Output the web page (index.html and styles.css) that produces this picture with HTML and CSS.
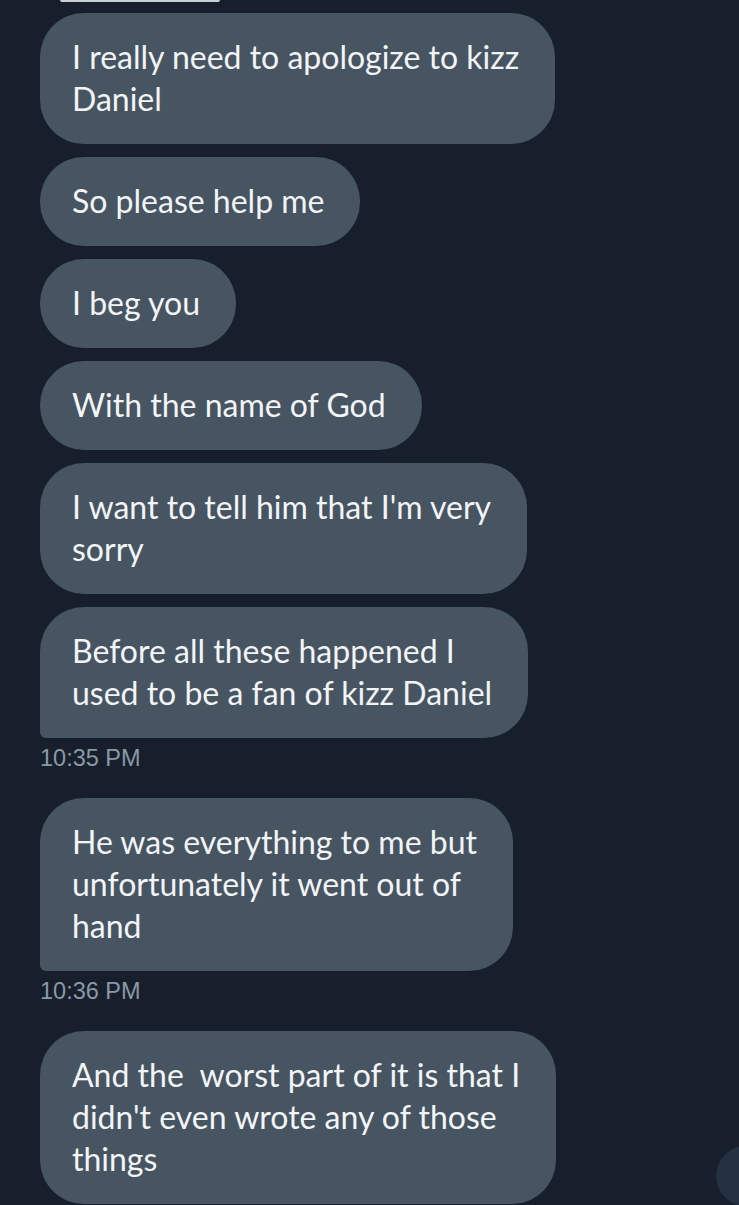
FILE: index.html
```html
<!DOCTYPE html>
<html lang="en">
<head>
    <meta charset="UTF-8">
    <meta name="viewport" content="width=device-width, initial-scale=1.0">
    <title>Messages</title>
    <link rel="stylesheet" href="styles.css">
</head>
<body>
    <div class="screen">
        <div class="thread">
            <div class="prev-card"></div>

            <div class="group">
                <div class="bubble">I really need to apologize to kizz<br>Daniel</div>
                <div class="bubble">So please help me</div>
                <div class="bubble">I beg you</div>
                <div class="bubble">With the name of God</div>
                <div class="bubble">I want to tell him that I'm very<br>sorry</div>
                <div class="bubble last">Before all these happened I<br>used to be a fan of kizz Daniel</div>
                <div class="time">10:35 PM</div>
            </div>

            <div class="group">
                <div class="bubble last">He was everything to me but<br>unfortunately it went out of<br>hand</div>
                <div class="time">10:36 PM</div>
            </div>

            <div class="group">
                <div class="bubble">And the&nbsp; worst part of it is that I<br>didn't even wrote any of those<br>things</div>
            </div>
        </div>

        <button class="scroll-btn" aria-label="Scroll to bottom"></button>
    </div>
</body>
</html>
```

FILE: styles.css
```css
html, body {
    margin: 0;
    background: #161f2b;
}
.screen {
    position: relative;
    width: 739px;
    height: 1205px;
    overflow: hidden;
    font-family: Lato, "Open Sans", sans-serif;
    color: #f2f4f6;
}
.thread {
    padding: 0 40px;
}
.prev-card {
    width: 160px;
    height: 2px;
    margin-left: 20px;
    margin-bottom: 11px;
    background: #c9ced4;
    border-radius: 0 0 12px 12px;
}
.group {
    display: flex;
    flex-direction: column;
    align-items: flex-start;
    gap: 13px;
    margin-bottom: 27px;
}
.bubble {
    background: #475462;
    border-radius: 44px;
    padding: 23px 36px 24px 32px;
    font-size: 32px;
    line-height: 42px;
    white-space: nowrap;
}
.bubble.last {
    border-bottom-left-radius: 6px;
}
.time {
    margin-top: -6px;
    font-family: "Liberation Sans", Arial, sans-serif;
    font-size: 23.5px;
    line-height: 26px;
    color: #8b98a5;
}
.scroll-btn {
    position: absolute;
    left: 716px;
    top: 1146px;
    width: 60px;
    height: 60px;
    border-radius: 50%;
    border: none;
    background: #243140;
}
```
